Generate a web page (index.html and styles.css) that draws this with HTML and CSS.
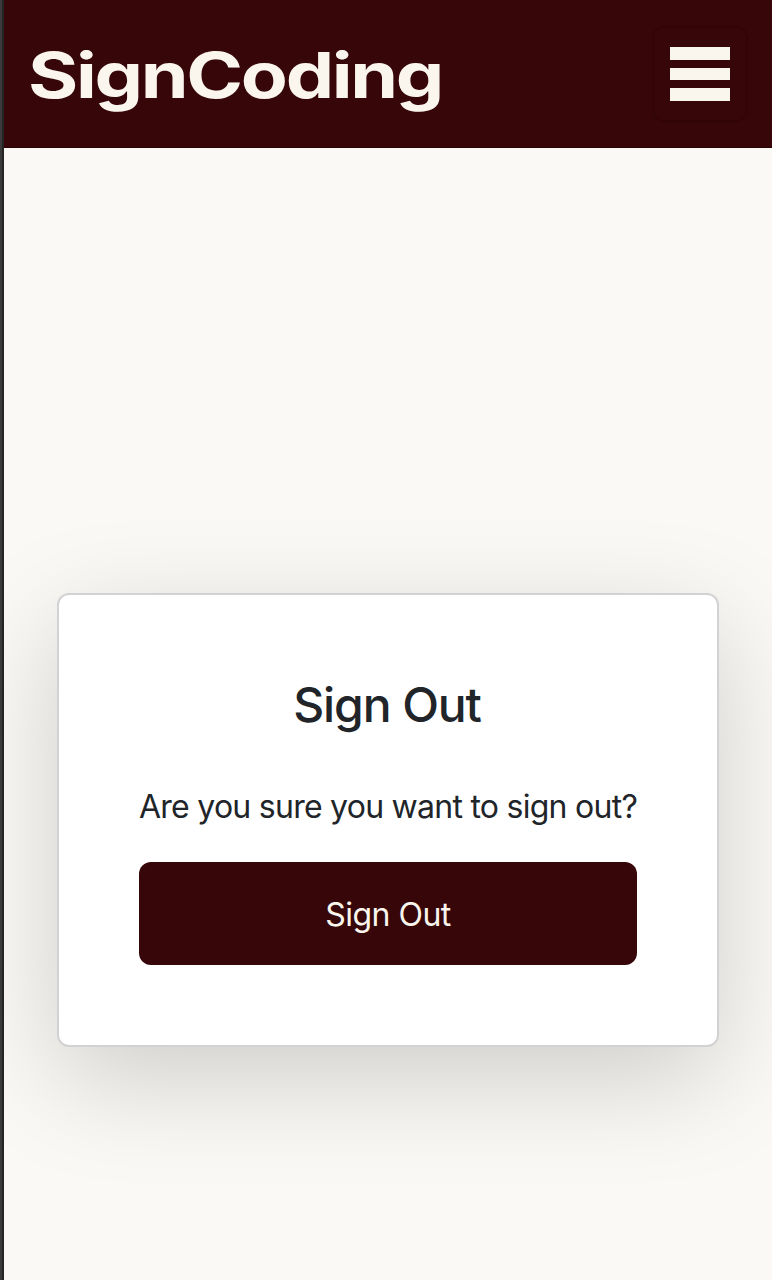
FILE: index.html
```html
<!DOCTYPE html>
<html lang="en">
<head>
<meta charset="utf-8">
<title>SignCoding</title>
<link rel="stylesheet" href="styles.css">
</head>
<body>
<div class="page">
  <header class="navbar">
    <a class="brand">SignCoding</a>
    <button class="toggler" aria-label="Toggle navigation">
      <svg width="60" height="54" viewBox="0 0 60 54" fill="currentColor" shape-rendering="crispEdges"><path d="M0 0h60v13H0zM0 21h60v12H0zM0 41h60v13H0z"/></svg>
    </button>
  </header>
  <main class="content">
    <section class="card">
      <h1 class="title">Sign Out</h1>
      <p class="message">Are you sure you want to sign out?</p>
      <button class="submit">Sign Out</button>
    </section>
  </main>
</div>
</body>
</html>
```
FILE: styles.css
```css
* { box-sizing: border-box; }
body {
  margin: 0;
  border-left: 2px solid #3a3a3a;
  font-family: Inter, "Liberation Sans", sans-serif;
  color: #212529;
  background: #faf9f5;
}
.page {
  display: flex;
  flex-direction: column;
  height: 1280px;
  border-left: 2px solid #242424;
  overflow: hidden;
}
.navbar {
  display: flex;
  align-items: center;
  justify-content: space-between;
  height: 148px;
  flex: none;
  padding: 0 24px;
  background: #370609;
  border-bottom: 1px solid #2b0305;
}
.brand {
  padding-top: 2px;
  font-size: 63px;
  line-height: 76px;
  font-weight: 700;
  letter-spacing: -1.9px;
  color: #faf6ed;
  transform: scaleX(1.22);
  transform-origin: left center;
}
.toggler {
  display: flex;
  align-items: center;
  justify-content: center;
  width: 96px;
  height: 96px;
  padding: 0;
  border: 2px solid #310507;
  border-radius: 12px;
  background: none;
  color: #faf6ed;
}
.content {
  flex: 1;
  padding: 445px 53px 0;
}
.card {
  width: 662px;
  height: 454px;
  padding: 80px;
  background: #fff;
  border: 2px solid rgba(0, 0, 0, .175);
  border-radius: 12px;
  box-shadow: 0 32px 108px rgba(0, 0, 0, .175);
  text-align: center;
}
.title {
  margin: 0 2px 48px 0;
  font-size: 48px;
  line-height: 60px;
  font-weight: 550;
  letter-spacing: -1.1px;
}
.message {
  margin: 0 0 31px;
  font-size: 32px;
  line-height: 48px;
  letter-spacing: -0.74px;
  white-space: nowrap;
}
.submit {
  display: block;
  width: 100%;
  height: 103px;
  padding: 2px 0 0;
  border: 0;
  border-radius: 12px;
  background: #370609;
  color: #faf6ed;
  font: 400 32px/48px Inter, "Liberation Sans", sans-serif;
  letter-spacing: -0.5px;
}
```
